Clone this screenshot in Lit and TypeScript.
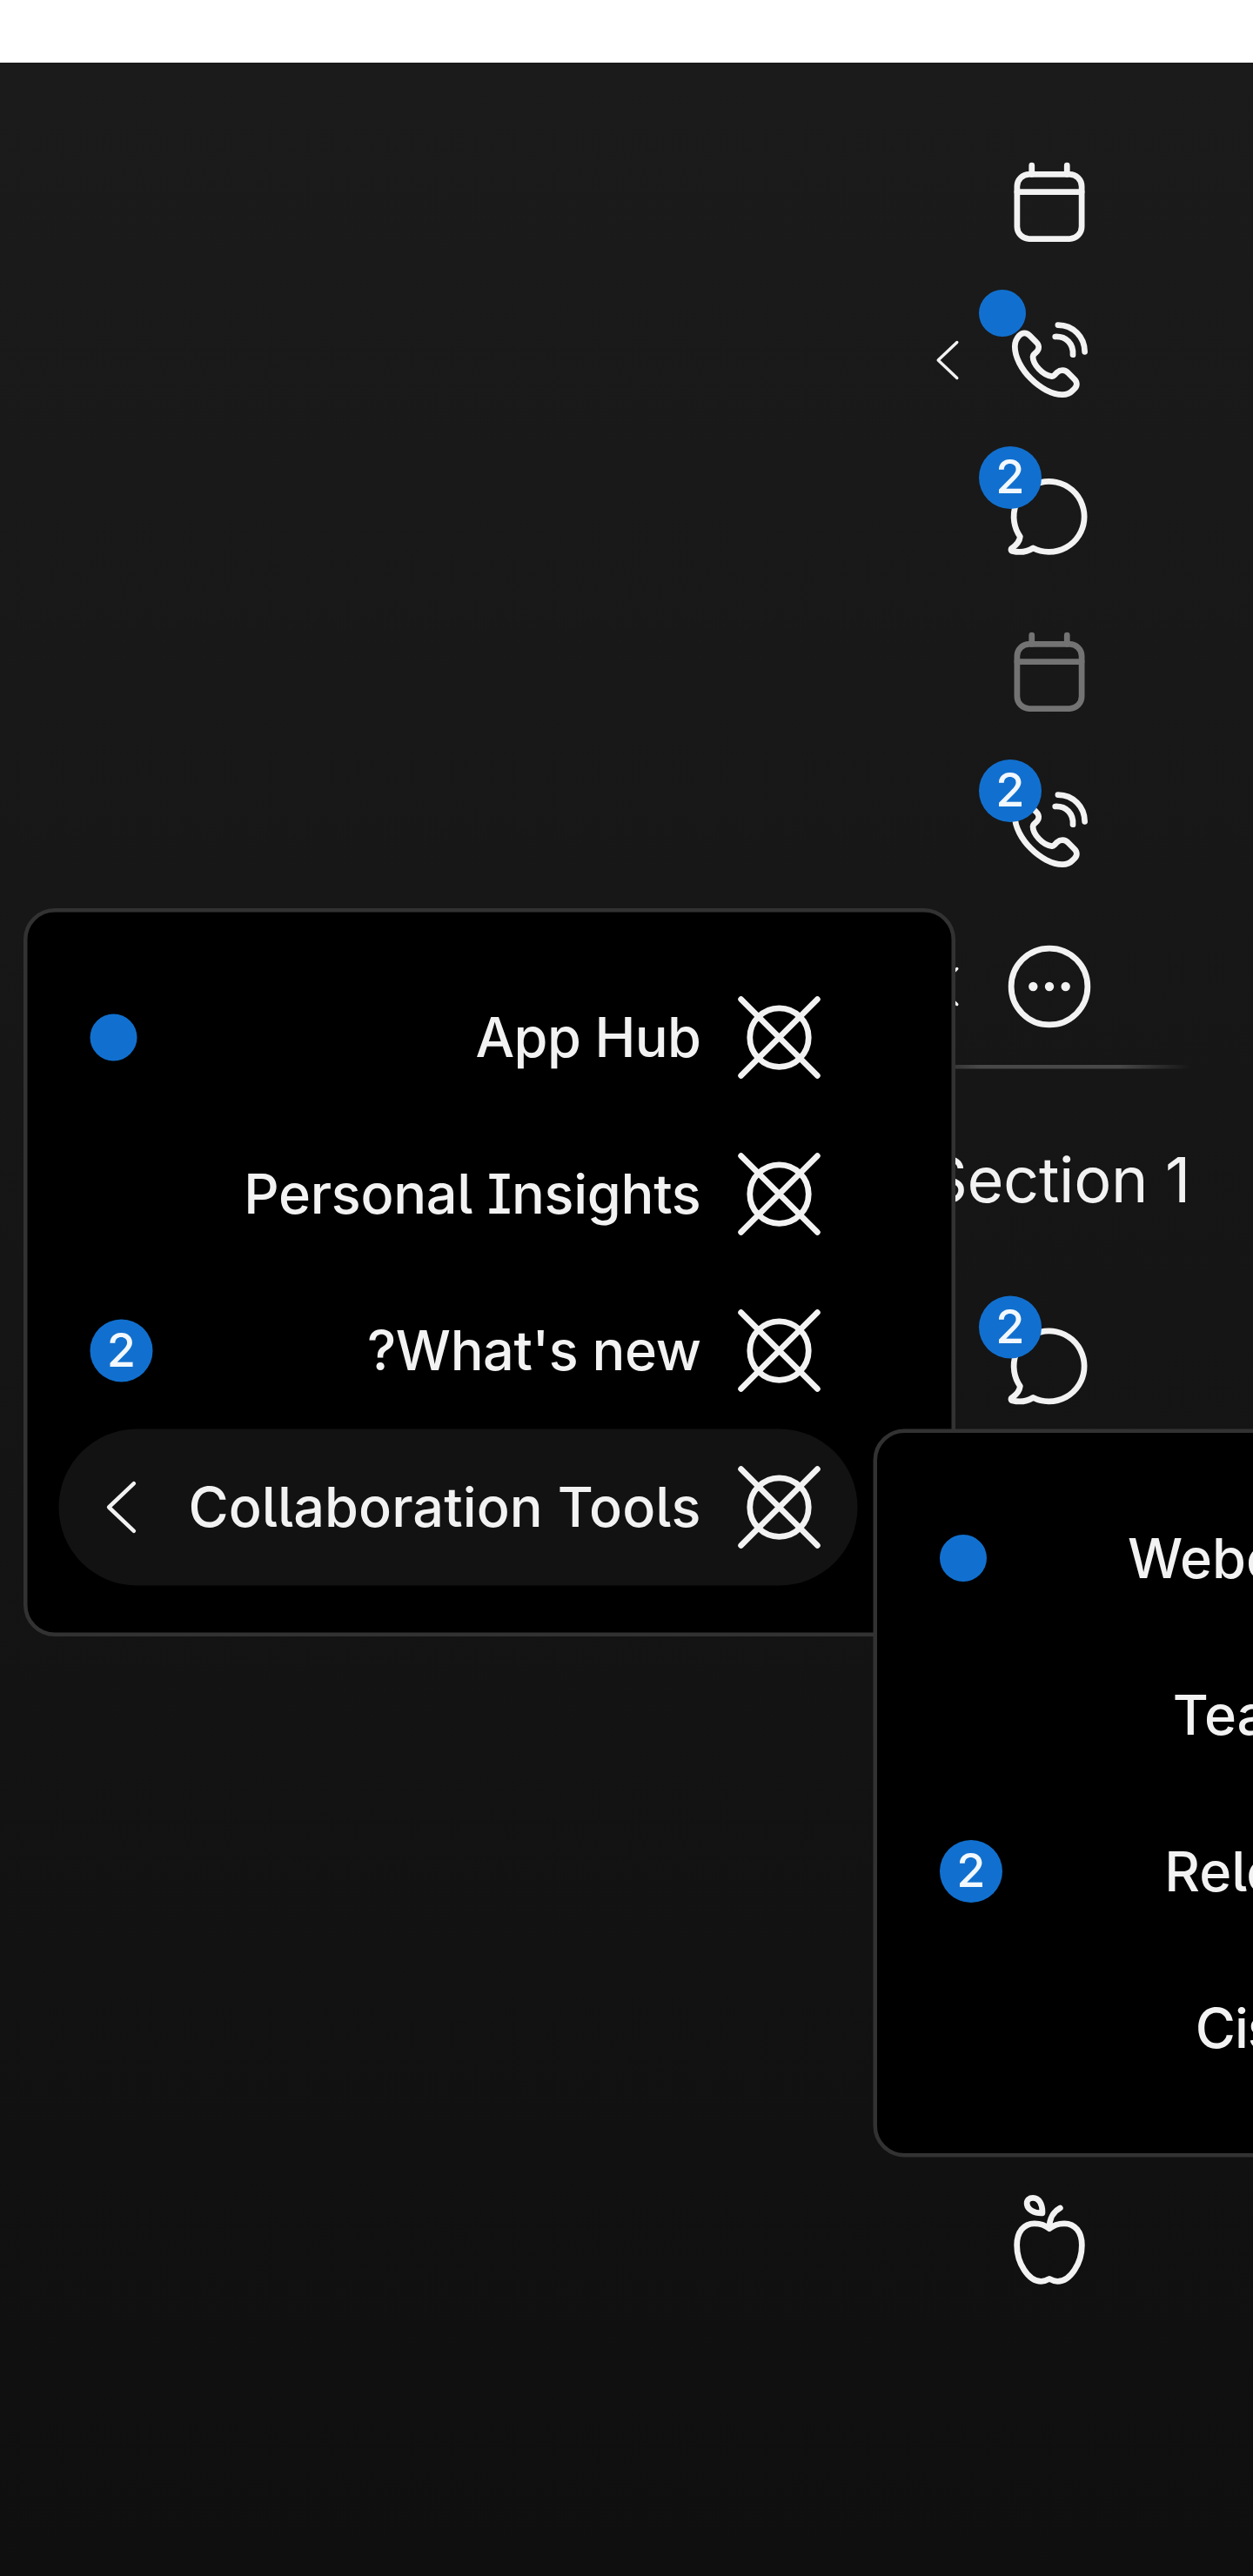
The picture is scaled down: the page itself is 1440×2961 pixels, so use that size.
import { LitElement, html, svg, css, nothing } from "lit";
import { customElement, property } from "lit/decorators.js";

type IconName = "calendar" | "phone" | "chat" | "more" | "apple" | "placeholder" | "arrow";

const icons: Record<IconName, unknown> = {
  calendar: svg`
    <rect x="3.75" y="4.5" width="16.5" height="16.5" rx="3.1" />
    <path d="M3.75 9H20.25M7.5 4.5V2.25M16.5 4.5V2.25" />`,
  phone: svg`
    <path d="M6.96 5.7C6.2 4.85 5.05 4.85 4.35 5.65C3.5 6.55 3.18 7.4 3.18 8.52C3.18 14 10 20.81 15.33 20.81C16.5 20.81 17.3 20.45 18 19.7L18.4 19.3C19.15 18.55 19.15 17.6 18.44 16.9L16.74 15.2C16 14.4 14.8 14.4 14 15.1L13.2 15.9C13.05 16.1 12.85 16.15 12.65 16.13C10.3 15.9 7.8 13.1 7.78 11.1C7.78 10.9 7.85 10.75 8 10.6L8.8 9.8C9.45 9.1 9.4 8.1 8.67 7.41Z" />
    <path d="M13.5 6C16.3 5.9 18.15 7.8 18 10.6M14.2 3.03C18.1 3.1 21 6 21.03 9.85" />`,
  chat: svg`
    <path d="M7.85 20A9 9 0 1 0 4.52 17.1C4.4 18.2 3.5 19.3 2.45 20C2.1 20.25 2.15 20.65 2.55 20.75C4.3 21.2 6.2 21 7.85 20Z" />`,
  more: svg`
    <circle cx="12" cy="12" r="9.75" />
    <g class="solid"><circle cx="7.85" cy="12" r="1.15" /><circle cx="12" cy="12" r="1.15" /><circle cx="16.15" cy="12" r="1.15" /></g>`,
  apple: svg`
    <path d="M12 9.3C11 8.4 9.6 7.95 8.2 7.95C5.4 7.95 3.7 10.2 3.7 13.5C3.7 18 6.6 22.75 9.9 22.75C10.8 22.75 11.4 22.45 12 22.1C12.6 22.45 13.2 22.75 14.1 22.75C17.4 22.75 20.3 18 20.3 13.5C20.3 10.2 18.6 7.95 15.8 7.95C14.4 7.95 13 8.4 12 9.3Z" />
    <path d="M12 9C12 6.8 13 4.9 14.75 4M10.2 5.3C8.2 5.4 6.25 4.4 6.25 2.8C6.25 1.9 6.9 1.4 7.8 1.4C9.4 1.4 10.3 3.1 10.2 5.3Z" />`,
  placeholder: svg`
    <circle cx="12" cy="12" r="7.5" />
    <path d="M2.25 2.25L21.75 21.75M21.75 2.25L2.25 21.75" />`,
  arrow: svg`<path d="M16.8 2.9L7.2 12L16.8 21.1" />`,
};

@customElement("nav-icon")
class NavIcon extends LitElement {
  @property() name: IconName = "calendar";
  static styles = css`
    :host { display: block; width: 24px; height: 24px; flex: none; }
    svg {
      display: block; width: 100%; height: 100%; overflow: visible;
      fill: none; stroke: currentColor; stroke-width: 1.5;
      stroke-linecap: round; stroke-linejoin: round;
    }
    .solid { fill: currentColor; stroke: none; }
  `;
  render() {
    return html`<svg viewBox="0 0 24 24" aria-hidden="true">${icons[this.name]}</svg>`;
  }
}

@customElement("nav-badge")
class NavBadge extends LitElement {
  @property() value = "";
  static styles = css`
    :host { display: block; flex: none; }
    .badge {
      display: flex; align-items: center; justify-content: center;
      width: 16px; height: 16px; border-radius: 50%;
      background: #1170cf; color: rgba(255, 255, 255, 0.95);
      font-size: 12px; line-height: 16px; font-weight: 500;
    }
    .dot { width: 12px; height: 12px; }
  `;
  render() {
    return html`<div class="badge ${this.value ? "" : "dot"}">${this.value}</div>`;
  }
}

interface RailItem { icon: IconName; badge?: string; arrow?: boolean; disabled?: boolean; }
interface MenuItem { label: string; badge?: string; arrow?: boolean; active?: boolean; tracking?: number; indent?: number; }

const mainItems: RailItem[] = [
  { icon: "calendar" },
  { icon: "phone", badge: "", arrow: true },
  { icon: "chat", badge: "2" },
  { icon: "calendar", disabled: true },
  { icon: "phone", badge: "2" },
  { icon: "more", arrow: true },
];

/* tracking: letter spacing that fits the label's length */
const menuItems: MenuItem[] = [
  { label: "App Hub", badge: "", tracking: -0.13 },
  { label: "Personal Insights", tracking: -0.06 },
  { label: "What's new?", badge: "2", tracking: -0.09 },
  { label: "Collaboration Tools", arrow: true, active: true, tracking: 0.02 },
];

/* indent: distance from the row's edge to the start of the label */
const subItems: MenuItem[] = [
  { label: "Webex", badge: "", indent: 48 },
  { label: "Teams", indent: 59.5 },
  { label: "Release", badge: "2", indent: 57.4 },
  { label: "Cisco", indent: 65.3, tracking: -0.25 },
];

@customElement("app-root")
class AppRoot extends LitElement {
  static styles = css`
    :host {
      display: block; width: 1440px; height: 2961px; overflow: hidden; background: #fff;
      font-family: Inter, "Liberation Sans", sans-serif;
      font-feature-settings: "cv05", "cv08";
    }
    .stage {
      position: relative; box-sizing: border-box;
      width: 320px; height: 658px; padding-top: 16px;
      transform: scale(4.5); transform-origin: 0 0; overflow: hidden;
      color: #f2f2f2;
    }
    .nav {
      box-sizing: border-box; height: 642px; padding: 16px;
      display: flex; flex-direction: column; align-items: flex-end;
      background: linear-gradient(180deg, #1b1b1b, #0f0f0f);
    }
    .rail-item {
      position: relative; box-sizing: border-box; width: 72px; height: 40px; padding-right: 24px;
      display: flex; align-items: center; justify-content: flex-end; gap: 8px;
      flex: none;
    }
    .rail-item.disabled { color: #737373; }
    .rail-item nav-badge { position: absolute; left: 18px; top: 2px; }
    .rail-arrow { width: 12px; height: 12px; }
    .divider {
      width: 72px; height: 1px; flex: none;
      background: linear-gradient(90deg, transparent, #484848 25%, #484848 75%, transparent);
    }
    .heading {
      margin: 16px 0; font-size: 16px; line-height: 24px; font-weight: 400;
      letter-spacing: -0.08px; white-space: nowrap; flex: none;
    }
    .footer { margin-top: 183px; }
    .menu {
      position: absolute; box-sizing: border-box; width: 238px; height: 186px;
      padding: 12px 24px 12px 8px; border: 1px solid #323232; border-radius: 8px; background: #000;
    }
    .menu.first { left: 6px; top: 232px; }
    .menu.second { left: 223px; top: 365px; }
    .menu-item {
      box-sizing: border-box; height: 40px; padding: 0 8px; border-radius: 20px;
      display: flex; align-items: center; gap: 8px;
    }
    .menu-item.active { background: #121212; }
    .label {
      flex: 1; font-size: 14px; line-height: 20px; font-weight: 500;
      white-space: nowrap; direction: rtl;
    }
    .menu-arrow { width: 16px; height: 16px; }
    .menu.second .menu-item { gap: 0; }
    .menu.second .label { direction: ltr; }
  `;

  private badge(value?: string) {
    return value === undefined ? nothing : html`<nav-badge .value=${value}></nav-badge>`;
  }

  private railItem(item: RailItem) {
    return html`<div class="rail-item ${item.disabled ? "disabled" : ""}">
      ${item.arrow ? html`<nav-icon class="rail-arrow" name="arrow"></nav-icon>` : nothing}
      <nav-icon name=${item.icon}></nav-icon>
      ${this.badge(item.badge)}
    </div>`;
  }

  private menuItem(item: MenuItem) {
    return html`<div class="menu-item ${item.active ? "active" : ""}">
      ${this.badge(item.badge)}
      ${item.arrow ? html`<nav-icon class="menu-arrow" name="arrow"></nav-icon>` : nothing}
      <span class="label" style="letter-spacing:${item.tracking ?? 0}px">${item.label}</span>
      <nav-icon name="placeholder"></nav-icon>
    </div>`;
  }

  private subItem(item: MenuItem) {
    const inset = item.badge === undefined ? 0 : item.badge ? 16 : 12;
    return html`<div class="menu-item">
      ${this.badge(item.badge)}
      <span
        class="label"
        style="padding-left:${(item.indent ?? 0) - inset}px;letter-spacing:${item.tracking ?? 0}px"
        >${item.label}</span
      >
    </div>`;
  }

  render() {
    return html`<div class="stage">
      <nav class="nav">
        ${mainItems.map((i) => this.railItem(i))}
        <div class="divider"></div>
        <div class="heading">Section 1</div>
        ${this.railItem({ icon: "chat", badge: "2" })}
        <div class="footer">${this.railItem({ icon: "apple" })}</div>
      </nav>
      <div class="menu first">${menuItems.map((i) => this.menuItem(i))}</div>
      <div class="menu second">${subItems.map((i) => this.subItem(i))}</div>
    </div>`;
  }
}
